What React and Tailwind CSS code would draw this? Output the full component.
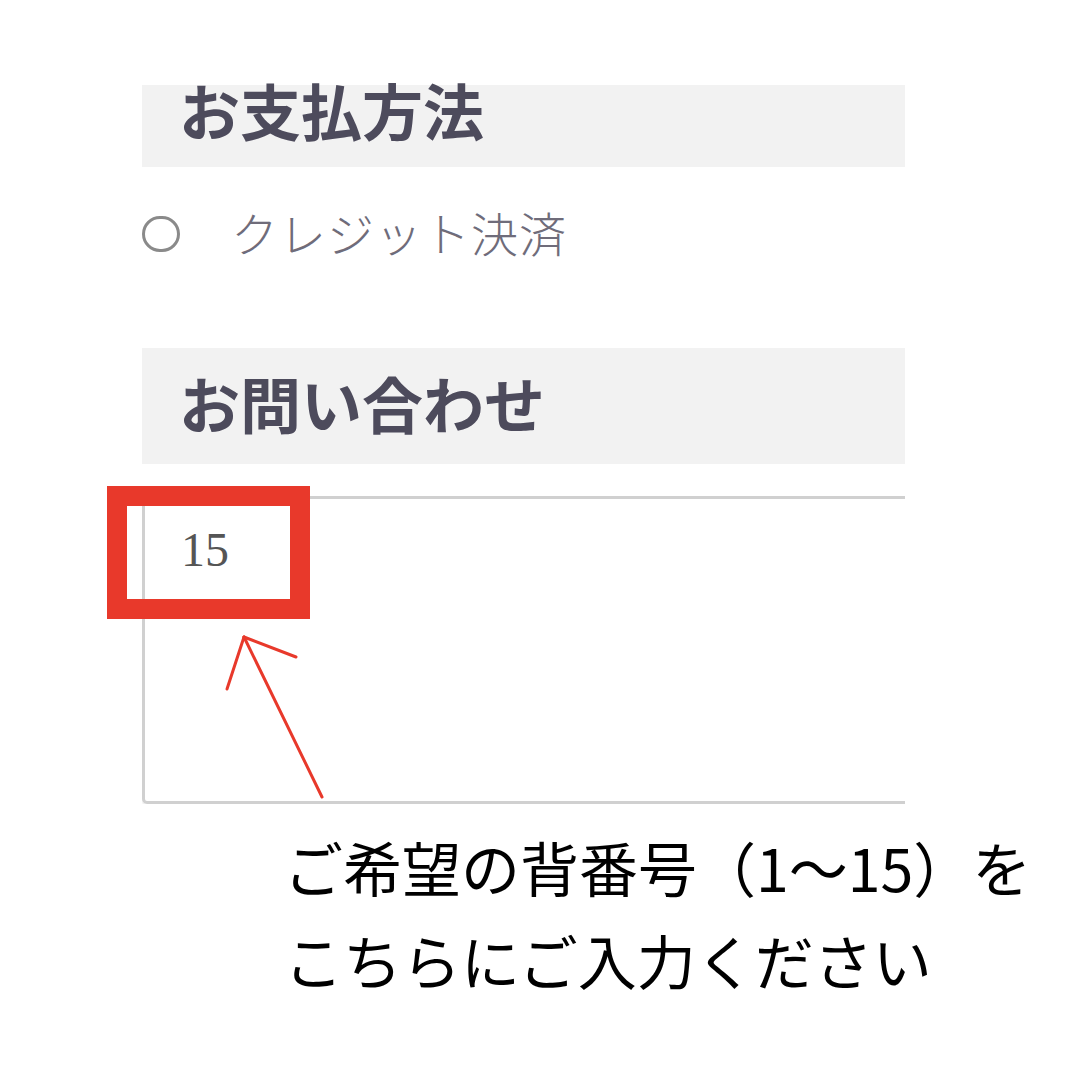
import React from 'react';

const jp = { fontFamily: '"Noto Sans CJK JP", "Noto Sans", sans-serif' };

function SectionHead({ children, className, textClass }) {
  return (
    <div className={`bg-[#f2f2f2] flex pl-[37px] ${className}`}>
      <span className={`text-[61px] font-bold text-[#4d4b5c] leading-[54px] ${textClass}`}>{children}</span>
    </div>
  );
}

export default function App() {
  return (
    <div className="relative w-[1080px] h-[1080px] bg-white overflow-hidden" style={jp}>
      <div className="ml-[142px] w-[763px] pt-[85px] overflow-hidden">
        <SectionHead className="h-[82px] items-start" textClass="-mt-[2px]">お支払方法</SectionHead>

        <div className="h-[181px] flex items-start pt-[47px]">
          <label className="flex items-center gap-[51px]">
            <span className="w-[38px] h-[36px] rounded-full border-[3px] border-[#8a8a8a] bg-white" />
            <span className="text-[47px] font-light text-[#6f6c7a] tracking-[1px] leading-[44px] -mt-[4px]">クレジット決済</span>
          </label>
        </div>

        <SectionHead className="h-[116px] items-center" textClass="-mt-[6px]">お問い合わせ</SectionHead>

        <div className="mt-[32px] w-[820px] h-[308px] border-[3px] border-[#d0d0d0] rounded-[5px] shadow-[0_2px_2px_rgba(0,0,0,0.08)] pl-[36px] pt-[26px]">
          <span className="text-[48px] text-[#555] leading-[50px]" style={{ fontFamily: '"Liberation Serif", serif' }}>15</span>
        </div>
      </div>

      <div className="ml-[284px] mt-[16px] text-[59px] text-black leading-[93px]">
        <p>ご希望の背番号（1〜15）を</p>
        <p>こちらにご入力ください</p>
      </div>

      {/* annotation */}
      <div className="absolute left-[107px] top-[486px] w-[203px] h-[133px] border-[20px] border-[#e8392b]" />
      <svg className="absolute left-0 top-0" width="1080" height="1080" viewBox="0 0 1080 1080">
        <g stroke="#e8392b" strokeWidth="3" fill="none" strokeLinecap="round">
          <path d="M322 797 L244 637" />
          <path d="M244 637 L227 689" />
          <path d="M244 637 L296 657" />
        </g>
      </svg>
    </div>
  );
}
